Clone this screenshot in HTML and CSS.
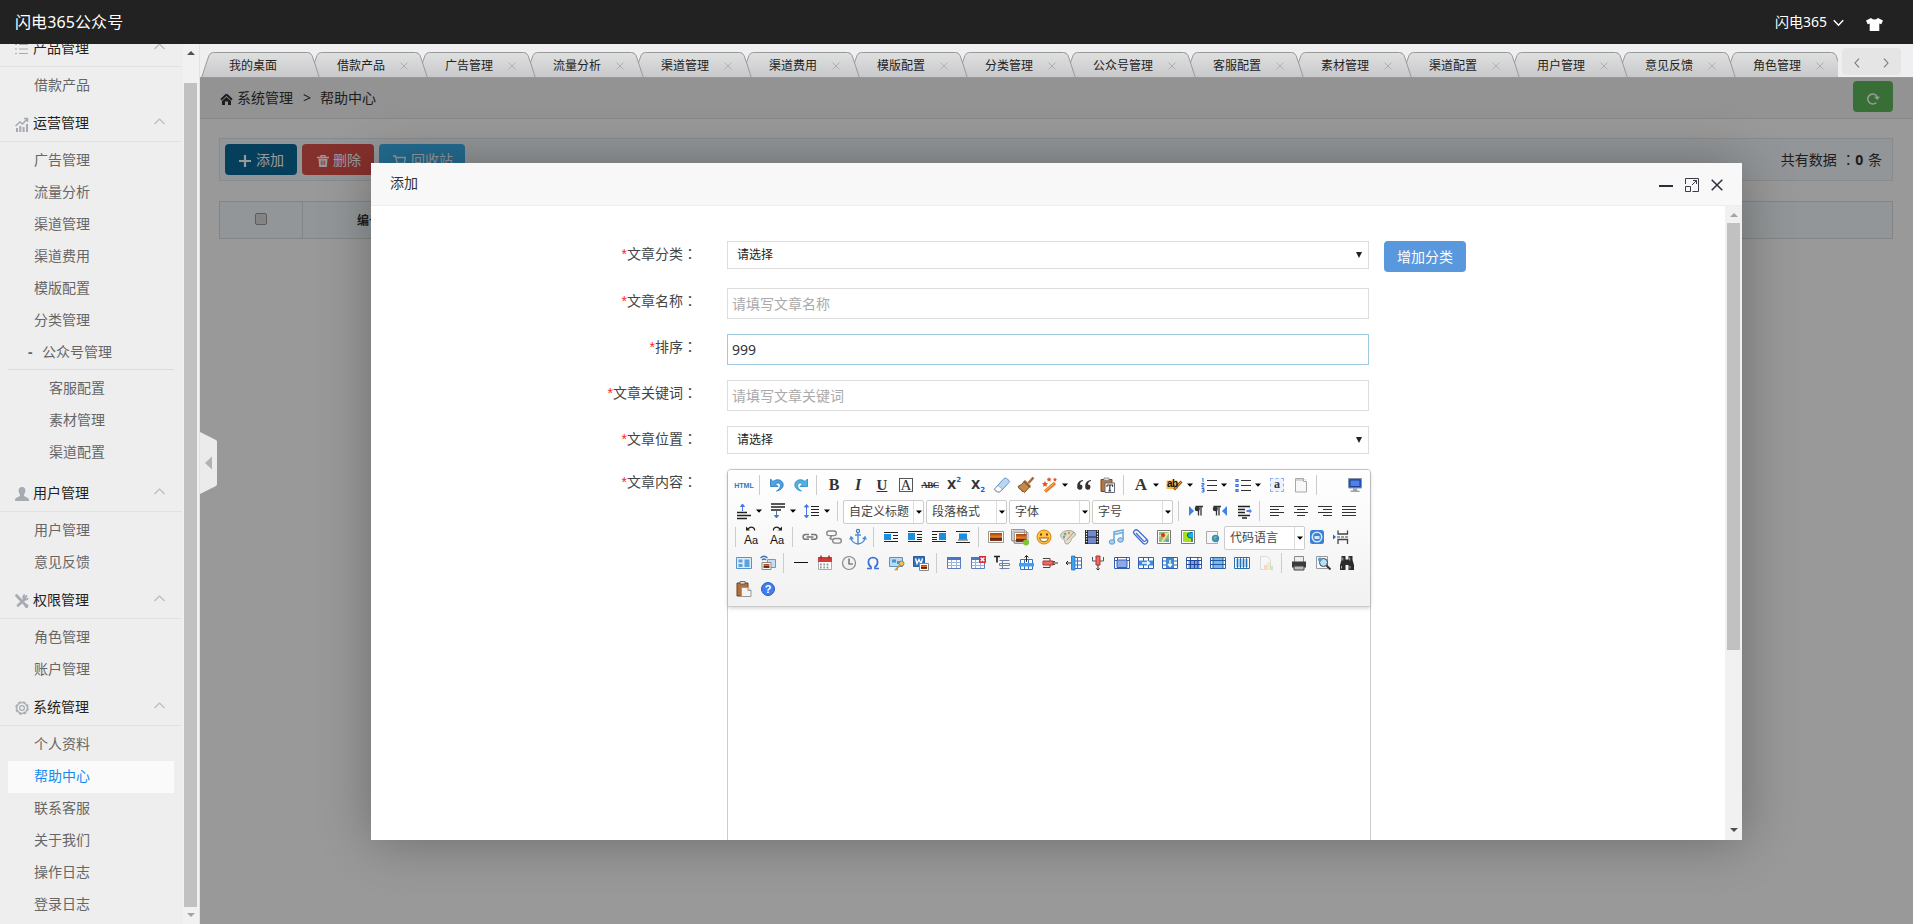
FILE: index.html
```html
<!DOCTYPE html>
<html lang="zh-CN">
<head>
<meta charset="utf-8">
<title>闪电365公众号</title>
<link rel="stylesheet" href="styles.css">
</head>
<body>
<svg class="defs" width="0" height="0">
  <defs>
    <linearGradient id="tabfill" x1="0" y1="0" x2="0" y2="1"><stop offset="0" stop-color="#dfe0e0"/><stop offset="1" stop-color="#c8c8ca"/></linearGradient>
    <linearGradient id="sunset" x1="0" y1="0" x2="0" y2="1"><stop offset="0" stop-color="#a83c10"/><stop offset=".55" stop-color="#f08a24"/><stop offset=".6" stop-color="#5a2410"/><stop offset="1" stop-color="#8a3a14"/></linearGradient>
    <symbol id="tab" viewBox="0 0 119 26"><path d="M.5 26L5.700 10 8 3.500Q9.200.5 12.500.5H106.500Q109.800.5 111 3.500L113.300 10 118.500 26" fill="url(#tabfill)" stroke="#999"/></symbol>
    <symbol id="tabwide" viewBox="0 0 131 26"><path d="M.5 26L5.700 10 8 3.500Q9.200.5 12.500.5H118.500Q121.800.5 123 3.500L125.300 10 130.500 26" fill="url(#tabfill)" stroke="#999"/></symbol>
    <symbol id="x" viewBox="0 0 8 8"><path d="M.5.5l7 7M7.500.5l-7 7" stroke="#a9b0b6" stroke-width="1" fill="none"/></symbol>
    <symbol id="up" viewBox="0 0 11 7"><path d="M.5 6l5-5 5 5" fill="none" stroke="#bbb" stroke-width="1.200"/></symbol>
    <symbol id="caret" viewBox="0 0 6 4"><path d="M0 .5h6L3 3.700z" fill="#000"/></symbol>
  </defs>
</svg>

<header class="top">
  <h1 class="brand">闪电365公众号</h1>
  <div class="user">闪电365
    <svg class="chev" width="11" height="8" viewBox="0 0 11 8"><path d="M.8 1.200l4.700 5 4.700-5" fill="none" stroke="#fff" stroke-width="1.500"/></svg>
    <svg width="17" height="13" viewBox="0 0 17 13"><path d="M5 0Q8.500 3 12 0L17 2.500 15.300 6.200 13.300 5.500V13H3.700V5.500L1.700 6.200 0 2.500z" fill="#fff"/></svg>
  </div>
</header>

<div class="main">
<aside class="side">
  <nav class="menu">
    <h2><svg class="mi" width="14" height="12" viewBox="0 0 14 12"><path d="M0 1.500h2M4 1.500h9M0 6h2M4 6h9M0 10.500h2M4 10.500h9" stroke="#a6abb3"/></svg>产品管理<svg class="up" width="11" height="7"><use href="#up"/></svg></h2>
    <ul><li>借款产品</li></ul>
    <h2><svg class="mi" width="14" height="15" viewBox="0 0 14 15"><path d="M1 11h2v4H1zM4.300 9h2v6h-2zM7.600 10h2v5h-2zM11 7h2v8h-2z" fill="#a6abb3"/><path d="M.5 9L5 5l2.500 2L12 2M9 1.500h3.500V5" fill="none" stroke="#a6abb3" stroke-width="1.500"/></svg>运营管理<svg class="up" width="11" height="7"><use href="#up"/></svg></h2>
    <ul><li>广告管理</li><li>流量分析</li><li>渠道管理</li><li>渠道费用</li><li>模版配置</li><li>分类管理</li>
      <li class="parent"><b>-</b>公众号管理</li>
      <li class="leaf first">客服配置</li><li class="leaf">素材管理</li><li class="leaf last">渠道配置</li></ul>
    <h2><svg class="mi" width="14" height="14" viewBox="0 0 14 14"><path d="M7 0C9.500 0 10.600 1.800 10.400 4 10.300 6 9.300 7 9 7.500 8.800 9 9.500 9.500 12 10.400 13.700 11 14 12 14 14H0C0 12 .3 11 2 10.400 4.500 9.500 5.200 9 5 7.500 4.700 7 3.700 6 3.600 4 3.400 1.800 4.500 0 7 0z" fill="#a6abb3"/></svg>用户管理<svg class="up" width="11" height="7"><use href="#up"/></svg></h2>
    <ul><li>用户管理</li><li>意见反馈</li></ul>
    <h2><svg class="mi" width="14" height="14" viewBox="0 0 14 14"><path d="M1.500 1.500l9.500 10M3 11.500L10 5" stroke="#a6abb3" stroke-width="2.600" stroke-linecap="round"/><path d="M12 1.500L9.500 4M13 4.200a2.500 2.500 0 1 1-3.200-3.400" fill="none" stroke="#a6abb3" stroke-width="1.800"/><circle cx="11.500" cy="12" r="2" fill="#a6abb3"/></svg>权限管理<svg class="up" width="11" height="7"><use href="#up"/></svg></h2>
    <ul><li>角色管理</li><li>账户管理</li></ul>
    <h2><svg class="mi" width="14" height="14" viewBox="0 0 14 14"><circle cx="7" cy="7" r="5.300" fill="none" stroke="#a6abb3" stroke-width="1.300"/><circle cx="7" cy="7" r="6.200" fill="none" stroke="#a6abb3" stroke-width="1.200" stroke-dasharray="3 1.870"/><circle cx="7" cy="7" r="2.400" fill="none" stroke="#a6abb3" stroke-width="1.200"/></svg>系统管理<svg class="up" width="11" height="7"><use href="#up"/></svg></h2>
    <ul><li>个人资料</li><li class="on">帮助中心</li><li>联系客服</li><li>关于我们</li><li>操作日志</li><li>登录日志</li></ul>
  </nav>
  <div class="sbar"><i class="tri dark"></i><i class="thumb"></i><i class="tri down"></i></div>
</aside>

<section class="work">
  <svg class="fold" width="17" height="62" viewBox="0 0 17 62"><path d="M0 0L16 8Q17 8.500 17 10V52Q17 53.500 16 54L0 62z" fill="#ebebeb"/><path d="M5 31L12 24.500v13z" fill="#b2b2b2"/></svg>
  <div class="tabs">
    <div class="strip">
      <div class="tab"><svg width="119" height="26"><use href="#tab"/></svg><span>我的桌面</span></div>
      <div class="tab"><svg width="119" height="26"><use href="#tab"/></svg><span>借款产品</span><svg class="x" width="8" height="8"><use href="#x"/></svg></div>
      <div class="tab"><svg width="119" height="26"><use href="#tab"/></svg><span>广告管理</span><svg class="x" width="8" height="8"><use href="#x"/></svg></div>
      <div class="tab"><svg width="119" height="26"><use href="#tab"/></svg><span>流量分析</span><svg class="x" width="8" height="8"><use href="#x"/></svg></div>
      <div class="tab"><svg width="119" height="26"><use href="#tab"/></svg><span>渠道管理</span><svg class="x" width="8" height="8"><use href="#x"/></svg></div>
      <div class="tab"><svg width="119" height="26"><use href="#tab"/></svg><span>渠道费用</span><svg class="x" width="8" height="8"><use href="#x"/></svg></div>
      <div class="tab"><svg width="119" height="26"><use href="#tab"/></svg><span>模版配置</span><svg class="x" width="8" height="8"><use href="#x"/></svg></div>
      <div class="tab"><svg width="119" height="26"><use href="#tab"/></svg><span>分类管理</span><svg class="x" width="8" height="8"><use href="#x"/></svg></div>
      <div class="tab wide"><svg width="131" height="26"><use href="#tabwide"/></svg><span>公众号管理</span><svg class="x" width="8" height="8"><use href="#x"/></svg></div>
      <div class="tab"><svg width="119" height="26"><use href="#tab"/></svg><span>客服配置</span><svg class="x" width="8" height="8"><use href="#x"/></svg></div>
      <div class="tab"><svg width="119" height="26"><use href="#tab"/></svg><span>素材管理</span><svg class="x" width="8" height="8"><use href="#x"/></svg></div>
      <div class="tab"><svg width="119" height="26"><use href="#tab"/></svg><span>渠道配置</span><svg class="x" width="8" height="8"><use href="#x"/></svg></div>
      <div class="tab"><svg width="119" height="26"><use href="#tab"/></svg><span>用户管理</span><svg class="x" width="8" height="8"><use href="#x"/></svg></div>
      <div class="tab"><svg width="119" height="26"><use href="#tab"/></svg><span>意见反馈</span><svg class="x" width="8" height="8"><use href="#x"/></svg></div>
      <div class="tab"><svg width="119" height="26"><use href="#tab"/></svg><span>角色管理</span><svg class="x" width="8" height="8"><use href="#x"/></svg></div>
    </div>
    <div class="pager">
      <svg width="6" height="10" viewBox="0 0 6 10"><path d="M5 .7L1 5l4 4.300" fill="none" stroke="#777" stroke-width="1.100"/></svg>
      <svg width="6" height="10" viewBox="0 0 6 10"><path d="M1 .7L5 5 1 9.300" fill="none" stroke="#777" stroke-width="1.100"/></svg>
    </div>
  </div>

  <div class="frame">
    <div class="crumb">
      <svg width="13" height="12" viewBox="0 0 13 12"><path d="M6.500 1.500L1 6.700M6.500 1.500L12 6.700" stroke="#333" stroke-width="2"/><path d="M6.500 4L11 8v4H8V8.500H5V12H2V8z" fill="#333"/></svg>
      <span>系统管理</span><i>&gt;</i><span>帮助中心</span>
      <span class="refresh"><svg width="14" height="13" viewBox="0 0 14 13"><path d="M10.300 10.500A5 5 0 1 1 11.300 5" fill="none" stroke="#fff" stroke-width="1.600"/><path d="M8 4.800h6L11.300 8z" fill="#fff"/></svg></span>
    </div>
    <div class="tools">
      <span class="btn add"><svg width="12" height="12" viewBox="0 0 12 12"><path d="M6 0v12M0 6h12" stroke="#fff" stroke-width="2.200"/></svg>添加</span>
      <span class="btn del"><svg width="12" height="12" viewBox="0 0 12 12"><path d="M0 2.500h12M4 2V.7h4V2" fill="none" stroke="#fff" stroke-width="1.300"/><path d="M1.500 3.800h9L9.800 12H2.200z" fill="#fff"/><path d="M4.300 5.500v4.500M6 5.500v4.500M7.700 5.500v4.500" stroke="#dd514c" stroke-width=".8"/></svg>删除</span>
      <span class="btn bin"><svg width="13" height="12" viewBox="0 0 13 12"><path d="M0 1h2.500l1.700 7.500h7L12.500 2.500H3" fill="none" stroke="#fff" stroke-width="1.300"/><circle cx="5" cy="11" r="1" fill="#fff"/><circle cx="10.500" cy="11" r="1" fill="#fff"/></svg>回收站</span>
      <span class="count">共有数据 <span class="colon" lang="zh-TW">：</span><b>0</b> 条</span>
    </div>
    <div class="thead"><div class="cb"><i></i></div><div class="no">编号</div></div>
    <div class="shade"></div>
  </div>
</section>
</div>

<div class="dialog">
  <div class="dhead"><span>添加</span>
    <svg width="14" height="14" viewBox="0 0 14 14"><path d="M0 8h14" stroke="#2e2d3c" stroke-width="2"/></svg>
    <svg width="14" height="14" viewBox="0 0 14 14"><path d="M.5 6V.5h13v13H7.500M.5 8.500h5v5h-5zM7 7l4.500-4.500M8 2.500h3.500V6" fill="none" stroke="#3c3b49"/></svg>
    <svg width="12" height="12" viewBox="0 0 12 12"><path d="M.7.700l10.600 10.600M11.300.7L.7 11.300" stroke="#2e2d3c" stroke-width="1.500"/></svg>
  </div>
  <div class="dbody">
    <form class="form">
      <div class="row r1"><label><em>*</em>文章分类<span class="colon" lang="zh-TW">：</span></label><div class="sel">请选择<i></i></div><span class="blue">增加分类</span></div>
      <div class="row"><label><em>*</em>文章名称<span class="colon" lang="zh-TW">：</span></label><div class="inp ph">请填写文章名称</div></div>
      <div class="row"><label><em>*</em>排序<span class="colon" lang="zh-TW">：</span></label><div class="inp focus">999</div></div>
      <div class="row"><label><em>*</em>文章关键词<span class="colon" lang="zh-TW">：</span></label><div class="inp ph">请填写文章关键词</div></div>
      <div class="row"><label><em>*</em>文章位置<span class="colon" lang="zh-TW">：</span></label><div class="sel">请选择<i></i></div></div>
      <div class="row"><label><em>*</em>文章内容<span class="colon" lang="zh-TW">：</span></label>
      <div class="editor">
       <div class="bar">
        <div class="line">
          <span class="ic html">HTML</span><s></s>
          <span class="ic"><svg viewBox="0 0 20 20"><path d="M3.500 4v7.500H11L8.500 9C10 7.500 12.500 7.500 13.200 9.500 14 12 12 14.500 9.500 16 14 15.500 17 12 16 8.500 15 4.500 9.500 3.500 6 6.500z" fill="#4ba3e6" stroke="#2a74b8" stroke-width=".8"/></svg></span>
          <span class="ic"><svg viewBox="0 0 20 20"><path d="M16.500 4v7.500H9L11.500 9C10 7.500 7.500 7.500 6.800 9.500 6 12 8 14.500 10.500 16 6 15.500 3 12 4 8.500 5 4.500 10.500 3.500 14 6.500z" fill="#4bb3e6" stroke="#2a84b8" stroke-width=".8"/></svg></span><s></s>
          <span class="ic ser b">B</span><span class="ic ser b it">I</span><span class="ic ser u">U</span><span class="ic ser bx"><i>A</i></span><span class="ic ser abc">ABC</span>
          <span class="ic xx">X<sup>2</sup></span><span class="ic xx">X<sub>2</sub></span>
          <span class="ic"><svg viewBox="0 0 20 20"><path d="M2.500 14L12 3.500Q13 2.500 14.500 3.500L17 5.500Q18 6.500 17 7.500L8 17H5.500L3 15.500Q2 14.800 2.500 14z" fill="#b9d6f3" stroke="#5f86bd" stroke-width=".9"/><path d="M2.500 14.200L6 10.500 10.200 14 8 16.700H5.500z" fill="#fff" stroke="#999" stroke-width=".7"/></svg></span>
          <span class="ic"><svg viewBox="0 0 20 20"><path d="M17.500 2.500L12.500 8" stroke="#ad6a2a" stroke-width="2.600"/><path d="M9 5.500L14.500 11 8.500 17.500 7 16 6 16.500 5 14.500 3.500 14 2 11.500Q6 10 9 5.500z" fill="#c38a45" stroke="#74461a" stroke-width=".9"/><path d="M8 6.500l6 6" stroke="#5c3512"/></svg></span>
          <span class="ic"><svg viewBox="0 0 20 20"><path d="M5 16.500L15 8" stroke="#e4731d" stroke-width="3.200"/><path d="M5 16L14 8.500" stroke="#f7c06a"/><g fill="#e8511c"><path d="M5 6l1 2 2 .3-1.500 1.400.4 2L5 10.800l-1.900.9.400-2L2 8.300 4 8zM9 2l.8 1.500 1.700.2-1.200 1.200.3 1.700L9 5.800l-1.500.8.300-1.700-1.200-1.200 1.700-.2zM15 2.500l.7 1.300 1.300.2-1 1 .3 1.500-1.300-.8-1.300.8.300-1.500-1-1 1.300-.2z"/></g></svg></span><span class="ar"><svg width="6" height="4"><use href="#caret"/></svg></span>
          <span class="ic"><svg viewBox="0 0 20 20"><path d="M9 6C6.500 6.500 6 8 6 9.500A2.600 2.600 0 1 1 3.300 11.500C3 8 5 5.500 9 5zM17 6C14.500 6.500 14 8 14 9.500A2.600 2.600 0 1 1 11.300 11.500C11 8 13 5.500 17 5z" fill="#333"/></svg></span>
          <span class="ic"><svg viewBox="0 0 20 20"><path d="M3 4.500h11v12H3z" fill="#b8763e" stroke="#7b4a20"/><path d="M6 3h5v2.500H6z" fill="#ddd" stroke="#777" stroke-width=".7"/><path d="M7 8h9.500v9.500H7z" fill="#fff" stroke="#667" /><path d="M9 10h5.600v1.800M9 10v1.800M11.800 10v6M10.500 15.800h2.600" fill="none" stroke="#334" stroke-width="1.200"/></svg></span><s></s>
          <span class="ic ser big">A</span><span class="ar"><svg width="6" height="4"><use href="#caret"/></svg></span>
          <span class="ic hl"><svg viewBox="0 0 20 20"><path d="M1.500 5.500h11v8.500h-11z" fill="#f5b94a"/><path d="M9 14.500L16.500 6.500" stroke="#8e4a16" stroke-width="2.600"/><path d="M9.500 14L16 7" stroke="#f3b05a"/></svg><i>ab</i></span><span class="ar"><svg width="6" height="4"><use href="#caret"/></svg></span>
          <span class="ic"><svg viewBox="0 0 20 20"><path d="M8 5.500h10M8 10.500h10M8 15.500h10" stroke="#333"/><path d="M3 4l1-.7v3.900M2.500 8.500H5V10H3v2h2.300M2.500 13.500H5v1.700H3.500H5V17H2.500" fill="none" stroke="#2d6be0"/></svg></span><span class="ar"><svg width="6" height="4"><use href="#caret"/></svg></span>
          <span class="ic"><svg viewBox="0 0 20 20"><path d="M8 5.500h10M8 10.500h10M8 15.500h10" stroke="#333"/><path d="M3 4.500h2v2H3zM3 9.500h2v2H3zM3 14.500h2v2H3z" fill="#fff" stroke="#2d6be0" stroke-width="1.200"/></svg></span><span class="ar"><svg width="6" height="4"><use href="#caret"/></svg></span>
          <span class="ic dash"><i>a</i></span>
          <span class="ic"><svg viewBox="0 0 20 20"><path d="M4.500 3.500h8l3 3v10.500h-11z" fill="#f8f8f8" stroke="#a8a8a8"/><path d="M5 4h10v2H5z" fill="#cfd4da"/><path d="M12.500 3.500v3h3" fill="#fff" stroke="#a8a8a8"/></svg></span><s></s>
          <span class="ic push"><svg viewBox="0 0 20 20"><path d="M3.500 3.500h13v9.500h-13z" fill="#2f5fc9" stroke="#8797ad"/><path d="M5 5h10v6.500H5z" fill="#4f82e6" stroke="#1d3f98"/><path d="M8 13.500h4v2H8zM5.500 15.500h9V17h-9z" fill="#98a2b3"/></svg></span>
        </div>
        <div class="line l2">
          <span class="ic"><svg viewBox="0 0 20 20"><path d="M3 11.500h10M3 14.500h14M3 17.500h10" stroke="#222" stroke-width="1.400"/><path d="M8.500 10V4M6.500 5.500l2-2.500 2 2.500z" fill="#4876e0" stroke="#4876e0"/></svg></span><span class="ar"><svg width="6" height="4"><use href="#caret"/></svg></span>
          <span class="ic"><svg viewBox="0 0 20 20"><path d="M3 3h14M3 6h14M3 9h10" stroke="#222" stroke-width="1.400"/><path d="M8.500 10v6M6.500 14.500l2 2.500 2-2.500z" fill="#7c9be0" stroke="#4876b0"/></svg></span><span class="ar"><svg width="6" height="4"><use href="#caret"/></svg></span>
          <span class="ic"><svg viewBox="0 0 20 20"><path d="M9 5.500h8M9 8.500h8M9 11.500h8M9 14.500h8" stroke="#222" stroke-width="1.200"/><path d="M4.500 5v10M2.500 6l2-2.500 2 2.500zM2.500 14.500l2 2.500 2-2.500z" fill="#4876e0" stroke="#4876e0"/></svg></span><span class="ar"><svg width="6" height="4"><use href="#caret"/></svg></span><s></s>
          <span class="combo">自定义标题<i><svg width="6" height="4"><use href="#caret"/></svg></i></span><span class="combo">段落格式<i><svg width="6" height="4"><use href="#caret"/></svg></i></span><span class="combo">字体<i><svg width="6" height="4"><use href="#caret"/></svg></i></span><span class="combo">字号<i><svg width="6" height="4"><use href="#caret"/></svg></i></span><s></s>
          <span class="ic"><svg viewBox="0 0 20 20"><path d="M3 5l5 5-5 5z" fill="#3f82ec"/><path d="M12.500 5.500v9M15 5.500v9M9.500 5.500H17" stroke="#333" fill="none" stroke-width="1.300"/><circle cx="11.300" cy="7.800" r="2.500" fill="#333"/></svg></span>
          <span class="ic"><svg viewBox="0 0 20 20"><path d="M17 5l-5 5 5 5z" fill="#3f82ec"/><path d="M6.500 5.500v9M9 5.500v9M3.500 5.500H11" stroke="#333" fill="none" stroke-width="1.300"/><circle cx="5.300" cy="7.800" r="2.500" fill="#333"/></svg></span>
          <span class="ic"><svg viewBox="0 0 20 20"><path d="M4 5.500h12M4 8.500h7M4 11.500h7M4 14.500h12M8 17h5" stroke="#222" stroke-width="1.500"/><path d="M12.500 9h3V7.500l2.500 2.500-2.500 2.500V11h-3z" fill="#4a86e8"/></svg></span><s></s>
          <span class="ic"><svg viewBox="0 0 20 20"><path d="M3 5.500h14M3 8.500h9M3 11.500h14M3 14.500h9" stroke="#333"/></svg></span>
          <span class="ic"><svg viewBox="0 0 20 20"><path d="M3 5.500h14M6 8.500h8M3 11.500h14M6 14.500h8" stroke="#333"/></svg></span>
          <span class="ic"><svg viewBox="0 0 20 20"><path d="M3 5.500h14M8 8.500h9M3 11.500h14M8 14.500h9" stroke="#333"/></svg></span>
          <span class="ic"><svg viewBox="0 0 20 20"><path d="M3 5.500h14M3 8.500h14M3 11.500h14M3 14.500h14" stroke="#333"/></svg></span>
        </div>
        <div class="line l3"><s></s>
          <span class="ic case wide"><svg viewBox="0 0 20 20"><path d="M7 5C9 2.500 12 2.500 13.500 5V6.500" fill="none" stroke="#222" stroke-width="1.300"/><path d="M5 2.500v4h4z" fill="#222"/></svg><i>A<small>a</small></i></span>
          <span class="ic case"><svg viewBox="0 0 20 20"><path d="M13 5C11 2.500 8 2.500 6.500 5V6.500" fill="none" stroke="#222" stroke-width="1.300"/><path d="M15 2.500v4h-4z" fill="#222"/></svg><i>A<small>a</small></i></span><s></s>
          <span class="ic"><svg viewBox="0 0 20 20"><path d="M9 7.500H5.500a2.400 2.400 0 0 0 0 4.800H9M11 7.500h3.500a2.400 2.400 0 0 1 0 4.800H11M6.500 10h7" fill="none" stroke="#777" stroke-width="1.500"/></svg></span>
          <span class="ic"><svg viewBox="0 0 20 20"><path d="M5 4h5a2.300 2.300 0 0 1 0 4.600H5A2.300 2.300 0 0 1 5 4zM11 11.500h4a2.300 2.300 0 0 1 0 4.600h-4a2.300 2.300 0 0 1 0-4.600zM8 8.500l-2 3 3 1.500" fill="none" stroke="#888" stroke-width="1.400"/></svg></span>
          <span class="ic"><svg viewBox="0 0 20 20"><circle cx="10" cy="4" r="1.600" fill="none" stroke="#3c7cb8" stroke-width="1.200"/><path d="M10 5.500V17M7 8h6M3 10.500Q3.500 16 10 17 16.500 16 17 10.500M1.800 12.500L3 10l2.300 2M18.200 12.500L17 10l-2.300 2" fill="none" stroke="#4e90cf" stroke-width="1.400"/></svg></span><s></s>
          <span class="ic"><svg viewBox="0 0 20 20"><path d="M3 5.500h14M12 8.500h5M12 11.500h5M3 14.500h14" stroke="#222"/><path d="M3 7h7v6H3z" fill="#1a8fe0"/></svg></span>
          <span class="ic"><svg viewBox="0 0 20 20"><path d="M3 4.500h14M12 7.500h5M12 10.500h5M12 12.500h5M3 14.500h14" stroke="#222"/><path d="M3 6h7v7H3z" fill="#1a8fe0"/></svg></span>
          <span class="ic"><svg viewBox="0 0 20 20"><path d="M3 4.500h14M3 7.500h5M3 10.500h5M3 12.500h5M3 14.500h14" stroke="#222"/><path d="M10 6h7v7h-7z" fill="#1a8fe0"/></svg></span>
          <span class="ic"><svg viewBox="0 0 20 20"><path d="M3 4.500h14M3 15.500h14" stroke="#222"/><path d="M6 6.500h8v6H6z" fill="#1a8fe0"/><path d="M5 13h10" stroke="#555"/></svg></span><s></s>
          <span class="ic"><svg viewBox="0 0 20 20"><path d="M2.500 4.500h15v11h-15z" fill="#fff" stroke="#999"/><path d="M4 6h12v8H4z" fill="url(#sunset)"/></svg></span>
          <span class="ic"><svg viewBox="0 0 20 20"><path d="M1.500 2.500h13v11h-13zM3 4h13.500v11H3zM4.500 5.500H18v11H4.500z" fill="#fff" stroke="#999"/><path d="M6 7h10.500v8H6z" fill="url(#sunset)"/><circle cx="16" cy="15.500" r="3" fill="#7cc730"/></svg></span>
          <span class="ic"><svg viewBox="0 0 20 20"><circle cx="10" cy="10" r="7" fill="#ffc440" stroke="#d98015"/><path d="M7 6.500v2M13 6.500v2" stroke="#7a3c05" stroke-width="2"/><path d="M5.500 11h9Q14 14.800 10 14.800T5.500 11z" fill="#fff" stroke="#9a4d0a" stroke-width=".9"/></svg></span>
          <span class="ic"><svg viewBox="0 0 20 20"><path d="M3 7C5 3 14 2 17 6c1.500 3-2 4-3 5-1 2-2 6-5 6-4-.500-1-4-3-4.500C4 12 2 10 3 7z" fill="#e2ddd3" stroke="#aaa497"/><circle cx="7" cy="7" r="1.500" fill="#7db15c"/><circle cx="11" cy="6" r="1.400" fill="#e59b4d"/><circle cx="6" cy="10" r="1.200" fill="#6e97cd"/><path d="M9 13l7-8" stroke="#b58d58"/></svg></span>
          <span class="ic"><svg viewBox="0 0 20 20"><path d="M3 3h14v14H3z" fill="#222"/><path d="M6 3.500h8v6H6zM6 10.500h8v6H6z" fill="#7289cf"/><path d="M4.500 3.500v13M15.500 3.500v13" stroke="#fff" stroke-width="1.300" stroke-dasharray="1.300 1.300"/></svg></span>
          <span class="ic"><svg viewBox="0 0 20 20"><path d="M8 14.500V5L17 3v9.500M8 7.500l9-2" fill="none" stroke="#6dade0" stroke-width="1.600"/><ellipse cx="6" cy="15" rx="2.800" ry="2.200" fill="#a7d0f0" stroke="#5b9bd0"/><ellipse cx="14.500" cy="13" rx="2.800" ry="2.200" fill="#a7d0f0" stroke="#5b9bd0"/></svg></span>
          <span class="ic"><svg viewBox="0 0 20 20"><path d="M6 6l7.500 8a1.800 1.800 0 0 0 2.600-2.400L8 3.500C5.500 1.500 2 4.500 4.500 7.300l8.500 9C16 18.500 19 15 17 12.500L10.500 6" fill="none" stroke="#4271d6" stroke-width="1.300"/></svg></span>
          <span class="ic"><svg viewBox="0 0 20 20"><path d="M3.500 3.500h13v13h-13z" fill="#fff" stroke="#777"/><path d="M5 5h10v10H5z" fill="#94bf7c"/><path d="M5 9l10-3M8 15l6-9" stroke="#f5e58a" stroke-width="1.500"/><circle cx="9" cy="8" r="2" fill="#d8332c"/><path d="M12 12h3v3h-3z" fill="#52a6dd"/></svg></span>
          <span class="ic"><svg viewBox="0 0 20 20"><path d="M3.500 3.500h13v13h-13z" fill="#fff" stroke="#777"/><path d="M5 5h10v10H5z" fill="#10b5e8"/><path d="M5 5h8L9 8l2 3 4 0v4H5z" fill="#a6e21c"/><path d="M14 5.500Q9 6 9.500 8.500T14 11v4" fill="none" stroke="#1559a8" stroke-width="1.200"/></svg></span>
          <span class="ic"><svg viewBox="0 0 20 20"><path d="M4.500 4.500h11v12h-11z" fill="#f7f7f7" stroke="#aaa"/><circle cx="13.500" cy="11.500" r="3.700" fill="#3d8ccc"/><path d="M11.500 11q2-3 3.500-1.500L13 12l1.500 2z" fill="#7dc45a"/></svg></span>
          <span class="combo">代码语言<i><svg width="6" height="4"><use href="#caret"/></svg></i></span>
          <span class="ic"><svg viewBox="0 0 20 20"><rect x="3" y="3" width="14" height="14" rx="2.500" fill="#3c80d6"/><circle cx="10" cy="10" r="4.700" fill="none" stroke="#cfe7ff" stroke-width="1.600"/><path d="M7.500 9h5v3h-5z" fill="#cfe7ff"/></svg></span>
          <span class="ic"><svg viewBox="0 0 20 20"><path d="M7 3.500V7h9.500V3.500M7 17v-4.500h9.500V17" fill="none" stroke="#444" stroke-width="1.300"/><path d="M6 10h12" stroke="#444" stroke-width="1.200" stroke-dasharray="3 1"/><path d="M2 7.500L5 10l-3 2.500z" fill="#2d5fd0"/></svg></span>
        </div>
        <div class="line l4">
          <span class="ic"><svg viewBox="0 0 20 20"><path d="M2.500 4.500h15v11h-15z" fill="#dceefa" stroke="#5a93c4"/><path d="M4.500 6.500h4v3h-4zM4.500 11h4v3h-4zM10.500 6.500h5v7.500h-5z" fill="#5ea2dc"/></svg></span>
          <span class="ic"><svg viewBox="0 0 20 20"><path d="M9.500 6.500h8v8h-8z" fill="#c8dcf5" stroke="#7894bc"/><path d="M2.500 5Q6 1.500 9.500 5M4 7q2-2 4 0" fill="none" stroke="#3377b8" stroke-width="1.200"/><path d="M4 9.500h9v7H4z" fill="#fff" stroke="#888"/><path d="M5.500 11h6v4h-6z" fill="url(#sunset)"/></svg></span><s></s>
          <span class="ic"><svg viewBox="0 0 20 20"><path d="M3 9.500h14" stroke="#111"/></svg></span>
          <span class="ic"><svg viewBox="0 0 20 20"><path d="M3.500 4.500h13v12h-13z" fill="#fff" stroke="#aaa"/><path d="M3 4h14v5H3z" fill="#d33a34"/><path d="M6 2.500v3M14 2.500v3" stroke="#8b2020" stroke-width="1.300"/><path d="M5 11.500h10M5 14.500h10" stroke="#999" stroke-width="1.800" stroke-dasharray="1.800 1.500"/></svg></span>
          <span class="ic"><svg viewBox="0 0 20 20"><circle cx="10" cy="10" r="6.500" fill="#f1f1f1" stroke="#888" stroke-width="1.200"/><path d="M10 5.500V11h4" fill="none" stroke="#555" stroke-width="1.200"/></svg></span>
          <span class="ic"><svg viewBox="0 0 20 20"><path d="M4 15.500h4V14C4.500 11.500 4 5 10 4.500 16 5 15.500 11.500 12 14v1.500h4" fill="none" stroke="#3d6fd8" stroke-width="1.700"/></svg></span>
          <span class="ic"><svg viewBox="0 0 20 20"><path d="M2.500 4.500h13v9h-13z" fill="#b9dcf4" stroke="#5594c4"/><path d="M5 6.500h4v3H5zM10 8h3v3h-3z" fill="#4b93ce"/><circle cx="14.500" cy="10.500" r="2.500" fill="#f0bf58" stroke="#b17c25"/><path d="M12.500 12.500L9 16.500h2" fill="none" stroke="#cf9430" stroke-width="1.700"/></svg></span>
          <span class="ic"><svg viewBox="0 0 20 20"><path d="M2.500 3.500h11v10h-11z" fill="#3170bd" stroke="#2a5b9c"/><path d="M4.500 5.500l1.500 5 2-4 2 4 1.500-5" fill="none" stroke="#fff" stroke-width="1.400"/><path d="M8.500 10.500h9v7h-9z" fill="#fff" stroke="#888"/><path d="M10 12h6v4h-6z" fill="url(#sunset)"/></svg></span><s></s>
          <span class="ic"><svg viewBox="0 0 20 20"><path d="M3.500 4.500h13v11h-13z" fill="#fff" stroke="#5b7dbb"/><path d="M3 4h14v3H3z" fill="#4b76c8"/><path d="M7.500 7v8M12.500 7v8M4 9.500h12M4 12.500h12" stroke="#9ab4e0"/></svg></span>
          <span class="ic"><svg viewBox="0 0 20 20"><path d="M3.500 4.500h13v11h-13z" fill="#fff" stroke="#5b7dbb"/><path d="M3 4h10v3H3z" fill="#4b76c8"/><path d="M7.500 7v8M12.500 7v8M4 9.500h12M4 12.500h12" stroke="#9ab4e0"/><path d="M11 3h7v7h-7z" fill="#d92f3a"/><path d="M12.700 4.700l3.600 3.600M16.300 4.700l-3.600 3.600" stroke="#fff" stroke-width="1.400"/></svg></span>
          <span class="ic"><svg viewBox="0 0 20 20"><path d="M2 3.500h6M5 3.500v6" stroke="#222" stroke-width="1.700"/><path d="M7.500 7.500h10M7.500 10.500h10v2h-10zM7.500 15.500h10M10.500 7.500v9" fill="none" stroke="#6f83ab"/></svg></span>
          <span class="ic"><svg viewBox="0 0 20 20"><path d="M4.500 6.500h12v10h-12zM8.500 6v11M12.500 6v11" fill="#fff" stroke="#3c6ec8"/><path d="M3 10h15v3.500H3z" fill="#3fa1ee"/><path d="M10.500 9V2.500M8.500 4.500l2-2 2 2" fill="none" stroke="#222"/></svg></span>
          <span class="ic"><svg viewBox="0 0 20 20"><path d="M3 5.500h7v3h5M3 14.500h7v-3h5" fill="none" stroke="#444"/><path d="M3 8h10v4H3z" fill="#ee6a66" stroke="#a33"/><path d="M13 10h5" stroke="#333"/></svg></span>
          <span class="ic"><svg viewBox="0 0 20 20"><path d="M8 4.500h9.500v11H8zM8 8h9M8 12h9M13.500 4v11" fill="#fff" stroke="#3c6ec8"/><path d="M7.500 3H11v14H7.500z" fill="#3fa1ee" stroke="#2867b8" stroke-width=".7"/><path d="M7 10H2M4 8l-2 2 2 2" fill="none" stroke="#222"/></svg></span>
          <span class="ic"><svg viewBox="0 0 20 20"><path d="M4.500 4v4h4v4M15.500 4v4h-4v4" fill="none" stroke="#555"/><path d="M8 3h4v9H8z" fill="#ee6a66" stroke="#a33"/><path d="M10 12v5M8.300 15.500L10 17l1.700-1.500" fill="none" stroke="#333"/></svg></span>
          <span class="ic"><svg viewBox="0 0 20 20"><path d="M2.500 4.500h15v11h-15z" fill="#fff" stroke="#2f5fae"/><path d="M2.500 7.500h15M5.500 4.500v11M14.500 4.500v11" stroke="#2f5fae"/><path d="M5 7h10v7.500H5z" fill="#8fa8ec" stroke="#3c5fae"/></svg></span>
          <span class="ic"><svg viewBox="0 0 20 20"><path d="M2.500 4.500h15v11h-15zM7.500 4v12M12.500 4v12" fill="#fff" stroke="#2f5fae"/><path d="M3 7.500h14v5H3z" fill="#3e8bd8"/><path d="M6 10h7M11 8l2.500 2-2.500 2" fill="none" stroke="#fff" stroke-width="1.300"/></svg></span>
          <span class="ic"><svg viewBox="0 0 20 20"><path d="M2.500 4.500h15v11h-15zM3 8h14M3 12h14" fill="#fff" stroke="#2f5fae"/><path d="M6 5h8v10H6z" fill="#3e8bd8"/><path d="M10 7v6M8 11l2 2.500 2-2.500" fill="none" stroke="#fff" stroke-width="1.300"/></svg></span>
          <span class="ic"><svg viewBox="0 0 20 20"><path d="M2.500 4.500h15v11h-15z" fill="#fff" stroke="#2f5fae"/><path d="M4.500 7h11v8h-11z" fill="#7d9fe8"/><path d="M2.500 7.500h15M2.500 11.500h15M6.500 4.500v11M10.500 7v8M13.800 4.500v11" stroke="#23499a"/></svg></span>
          <span class="ic"><svg viewBox="0 0 20 20"><path d="M2.500 4.500h15v11h-15z" fill="#fff" stroke="#2f5fae"/><path d="M5 5h10v10H5z" fill="#7db4ea"/><path d="M2.500 7.500h15M2.500 11.500h15M5 4.500v11M15 4.500v11" stroke="#235a9e"/></svg></span>
          <span class="ic"><svg viewBox="0 0 20 20"><path d="M2.500 4.500h15v11h-15z" fill="#fff" stroke="#2f6fae"/><path d="M4 6h12v8H4z" fill="#a5cdf0"/><path d="M5.500 4.500v11M8.500 4.500v11M11.500 4.500v11M14.500 4.500v11" stroke="#2f6fae"/></svg></span>
          <span class="ic faint"><svg viewBox="0 0 20 20"><path d="M4.500 3.500h7l3 3v10h-10z" fill="#fafafa" stroke="#aaa"/><path d="M8 12h3v5H8z" fill="#f5a06a"/><path d="M11 9h3v8h-3z" fill="#f5d86a"/><path d="M14 13h3v4h-3z" fill="#8cc96a"/></svg></span><s></s>
          <span class="ic"><svg viewBox="0 0 20 20"><path d="M5.500 3.500h9v6h-9z" fill="#eee" stroke="#888"/><path d="M3 8.500h14v6H3z" fill="#3b3b3b"/><path d="M5 13h10v4H5z" fill="#bbb" stroke="#444"/></svg></span>
          <span class="ic"><svg viewBox="0 0 20 20"><path d="M3.500 3.500h11v12h-11z" fill="#f6f9fc" stroke="#999"/><circle cx="10.500" cy="9.500" r="4" fill="#bcdff5" stroke="#345"/><path d="M13.500 12.500l4 4" stroke="#333" stroke-width="2"/><circle cx="7" cy="6.500" r="2" fill="#4a9bd8"/></svg></span>
          <span class="ic"><svg viewBox="0 0 20 20"><path d="M4.500 3h4v3.500h3V3h4v4L17 12v5h-5.500v-5h-3v5H3v-5l1.500-5z" fill="#2b2b2b"/><path d="M4.500 13v2.500M13 13v2.500M5.800 4.500v3M12.700 4.500v3" stroke="#aaa"/></svg></span>
        </div>
        <div class="line l5">
          <span class="ic"><svg viewBox="0 0 20 20"><path d="M3 4h11v13H3z" fill="#b0713d" stroke="#6f421c"/><path d="M6 2.500h5V5H6z" fill="#ddd" stroke="#555" stroke-width=".8"/><path d="M7.500 8.500H14l3 3v6H7.500z" fill="#f4f4f4" stroke="#999"/><path d="M14 8.500v3h3" fill="#ddd" stroke="#999"/></svg></span>
          <span class="ic help"><i>?</i></span>
        </div>
       </div>
      </div></div>
    </form>
    <div class="sbar dsb"><i class="tri"></i><i class="thumb"></i><i class="tri down dark"></i></div>
  </div>
</div>
</body>
</html>
```
FILE: styles.css
```css
* { box-sizing: border-box; }
html { height: 924px; overflow: hidden; }
body { margin: 0; height: 924px; overflow: hidden; position: relative; background: #fff; color: #333; font: 14px/20px "Noto Sans", "Noto Sans CJK SC", sans-serif; display: flex; flex-direction: column; }
svg { flex: none; display: block; }
i, em { font-style: normal; }
.defs { position: absolute; }
.colon { font-family: "Noto Sans CJK TC", sans-serif; line-height: 1; }

.top { flex: none; height: 44px; background: #222; color: #fff; display: flex; align-items: center; justify-content: space-between; padding: 0 30px 0 15px; }
.brand { margin: 0; font-size: 16px; font-weight: 400; line-height: 44px; letter-spacing: .1px; }
.user { display: flex; align-items: center; height: 44px; line-height: 42px; }
.user .chev { margin: 2px 22px 0 6px; }
.user svg:last-child { margin-top: 4px; }

.main { flex: 1; display: flex; min-height: 0; }
.side { width: 200px; flex: none; background: #eee; border-right: 1px solid #e2e2e2; display: flex; overflow: hidden; }
.menu { width: 182px; margin-top: -14px; }
.menu h2 { margin: 0; height: 37px; border-bottom: 1px solid #e2e2e2; display: flex; align-items: center; font-size: 14px; font-weight: 400; color: #222; padding: 0 17px 1px 15px; }
.mi { width: 14px; margin: 3px 4px 0 0; }
.up { margin: -2px 0 0 auto; }
.menu ul { list-style: none; margin: 0; padding: 3px 8px; }
.menu li { height: 32px; line-height: 30px; padding-left: 26px; color: #666; }
.menu li.parent { padding-left: 20px; height: 33px; border-bottom: 1px solid #dcdcdc; margin-bottom: 3px; }
.menu li.parent b { display: inline-block; width: 14px; }
.menu li.leaf { padding-left: 41px; }
.menu li.last { margin-bottom: 3px; }
.menu li.on { background: #fafafa; color: #148cf1; }

.sbar { width: 15px; margin-left: 1px; background: #f1f1f1; display: flex; flex-direction: column; align-items: center; }
.side .sbar { padding: 7px 0 6px; width: 16px; }
.sbar .thumb { width: 13px; background: #c1c1c1; }
.side .thumb { height: 824px; margin: 28px 1px 6px 0; }
.tri { width: 0; height: 0; border: 4px solid transparent; border-top: 0; border-bottom: 4px solid #a3a3a3; }
.tri.dark { border-bottom-color: #505050; }
.tri.down { border-bottom: 0; border-top: 4px solid #a3a3a3; }
.tri.down.dark { border-top-color: #505050; }

.work { flex: 1; min-width: 0; position: relative; display: flex; flex-direction: column; }
.fold { position: absolute; left: 0; top: 388px; z-index: 5; }
.tabs { height: 34px; flex: none; background: #efeff1; border-bottom: 1px solid #999; display: flex; }
.strip { width: 1638px; overflow: hidden; padding: 8px 0 0 1px; display: flex; font-size: 12px; color: #222; }
.tab { position: relative; flex: none; width: 119px; height: 26px; margin-right: -11px; display: flex; align-items: center; padding-left: 28px; }
.tab.wide { width: 131px; }
.tab > svg:first-child { position: absolute; left: 0; top: 0; }
.tab > span, .tab .x { position: relative; z-index: 40; }
.tab > span { margin-top: 1px; }
.tab .x { margin: 1px 0 0 15px; }
.tab:nth-child(1) > svg:first-child { z-index: 20; }
.tab:nth-child(2) > svg:first-child { z-index: 19; }
.tab:nth-child(3) > svg:first-child { z-index: 18; }
.tab:nth-child(4) > svg:first-child { z-index: 17; }
.tab:nth-child(5) > svg:first-child { z-index: 16; }
.tab:nth-child(6) > svg:first-child { z-index: 15; }
.tab:nth-child(7) > svg:first-child { z-index: 14; }
.tab:nth-child(8) > svg:first-child { z-index: 13; }
.tab:nth-child(9) > svg:first-child { z-index: 12; }
.tab:nth-child(10) > svg:first-child { z-index: 11; }
.tab:nth-child(11) > svg:first-child { z-index: 10; }
.tab:nth-child(12) > svg:first-child { z-index: 9; }
.tab:nth-child(13) > svg:first-child { z-index: 8; }
.tab:nth-child(14) > svg:first-child { z-index: 7; }
.tab:nth-child(15) > svg:first-child { z-index: 6; }
.pager { margin: 4px 0 0 4px; width: 59px; height: 27px; border-radius: 4px; background: #e5e5e5; display: flex; align-items: center; justify-content: space-between; padding: 2px 12px 0; }

.frame { flex: 1; position: relative; background: #fff; }
.shade { position: absolute; inset: 0; background: rgba(0,0,0,.4); }
.crumb { height: 41px; background: #f5f5f5; border-bottom: 1px solid #e5e5e5; display: flex; align-items: center; padding: 0 20px; }
.crumb > svg { margin: 2px 4px 0 0; }
.crumb i { margin: 0 9px 0 10px; }
.refresh { margin: -3px 0 0 auto; width: 40px; height: 31px; border-radius: 4px; background: #5eb95c; display: flex; align-items: center; justify-content: center; padding-top: 3px; }
.tools { margin: 19px 20px 0 19px; height: 43px; border: 1px solid #e5e5e5; background: #f5fafe; display: flex; align-items: center; padding-left: 5px; gap: 5px; }
.btn { height: 31px; border-radius: 4px; color: #fff; display: flex; align-items: center; padding: 0 13px 0 14px; }
.btn svg { margin: 2px 5px 0 0; }
.add { background: #0a6999; }
.del { background: #dd514c; padding: 0 13px 0 15px; }
.del svg { margin-right: 4px; }
.bin { background: #3bb4f2; padding-right: 12px; width: 86px; }
.count { margin-left: auto; padding-right: 10px; word-spacing: 1px; }
.thead { margin: 20px 20px 0 19px; height: 38px; border: 1px solid #ddd; background: #f5fafe; display: flex; font-size: 12px; font-weight: 700; }
.cb { width: 83px; border-right: 1px solid #ddd; display: flex; align-items: center; justify-content: center; }
.cb i { width: 12px; height: 12px; border: 1px solid #999; border-radius: 2px; margin-top: -2px; background: #ddd; }
.no { padding-left: 54px; line-height: 37px; }

.dialog { position: absolute; left: 371px; top: 163px; width: 1371px; height: 677px; background: #fff; box-shadow: 1px 1px 50px rgba(0,0,0,.3); z-index: 50; display: flex; flex-direction: column; overflow: hidden; }
.dhead { flex: none; height: 43px; background: #f8f8f8; border-bottom: 1px solid #eee; padding: 0 19px; display: flex; align-items: center; gap: 12px; }
.dhead span { margin: -2px auto 0 0; }
.dhead svg { margin-top: 2px; }
.dbody { flex: 1; display: flex; min-height: 0; }
.form { flex: 1; padding-top: 35px; color: #444; overflow: hidden; }
.row { display: flex; align-items: flex-start; margin-bottom: 15px; }
.row.r1 { margin-bottom: 16px; }
.row label { width: 326px; height: 28px; margin-right: 30px; line-height: 26px; text-align: right; flex: none; }
.row em { color: #f22; font-family: "Liberation Sans", sans-serif; line-height: 1; }
.inp, .sel { width: 642px; border: 1px solid #ddd; background: #fff; }
.inp { height: 31px; line-height: 30px; padding-left: 4px; color: #333; }
.ph { color: #aaa; }
.focus { border-color: #9fcbe2; }
.sel { height: 28px; line-height: 26px; font-size: 12px; padding: 0 6px 0 9px; color: #222; display: flex; justify-content: space-between; align-items: center; }
.sel i { width: 0; height: 0; border: 3px solid transparent; border-top: 6px solid #222; border-bottom: 0; }
.blue { margin-left: 15px; width: 82px; height: 31px; border-radius: 4px; background: #5a98de; color: #fff; text-align: center; line-height: 31px; }
.dsb { width: 17px; margin: 0; padding-top: 7px; }
.dsb .thumb { height: 427px; margin: 6px 0 178px; }

.editor { width: 644px; height: 500px; border: 1px solid #ccc; border-radius: 4px 4px 0 0; }
.bar { height: 137px; border-bottom: 1px solid #ccc; border-radius: 3px 3px 0 0; background: linear-gradient(#fff, #f1f1f1); box-shadow: 0 1px 4px rgba(0,0,0,.2); padding: 2px 2px 0 4px; }
.line { height: 26px; display: flex; align-items: center; }
.line s { flex: none; width: 9px; height: 20px; border-left: 1px solid #ccc; transform: translateX(3px); }
.ic { flex: none; width: 24px; height: 20px; display: flex; align-items: center; justify-content: center; color: #333; }
.ic > svg { width: 20px; height: 20px; }
.ar { width: 10px; display: flex; flex: none; }
.push { margin-left: auto; margin-right: 1px; }
.html { font: 700 7px "Liberation Sans", sans-serif; color: #3177b5; }
.ser { font: 400 17px/20px "Liberation Serif", serif; }
.ser.b { font-weight: 700; font-size: 16px; }
.it { font-style: italic; }
.u { text-decoration: underline; font-size: 15px; font-weight: 700; }
.bx i { border: 1px solid #555; width: 14px; height: 14px; line-height: 13px; text-align: center; font-size: 15px; }
.abc { font-size: 9px; font-weight: 700; text-decoration: line-through; letter-spacing: -.5px; }
.xx { font: 700 12px/20px "DejaVu Sans", sans-serif; }
.xx sup, .xx sub { font-size: 7px; color: #2457d6; line-height: 8px; }
.xx sup { align-self: flex-start; margin-top: 1px; }
.xx sub { align-self: flex-end; margin-bottom: 1px; }
.big { font-size: 17px; font-weight: 700; }
.hl { position: relative; }
.hl i { position: absolute; left: 4px; top: 0; font: 700 10px/18px "Liberation Sans", sans-serif; color: #111; letter-spacing: -.5px; }
.dash i { width: 14px; height: 14px; border: 1px dashed #8fb2ee; background: #eef4ff; font: 700 12px/10px "Liberation Serif", serif; text-align: center; }
.combo { flex: none; width: 81px; height: 24px; margin: 2px 2px 0 0; border: 1px solid #ccc; border-radius: 2px; background: #fff; font-size: 12px; line-height: 22px; padding-left: 5px; display: flex; justify-content: space-between; white-space: nowrap; }
.combo i { width: 10px; border-left: 1px solid #ddd; display: flex; align-items: center; justify-content: center; }
.l3 .combo { margin: 2px 0 0 0; }
.l3 s:first-child { width: 5px; }
.case { position: relative; }
.case.wide { width: 28px; }
.case > svg { position: absolute; left: 2px; top: -3px; }
.case.wide > svg { left: 4px; }
.case i { font: 400 12px/12px "Liberation Sans", sans-serif; color: #111; margin-top: 5px; }
.case small { font-size: 11px; }
.faint { opacity: .35; }
.help i { width: 14px; height: 14px; border-radius: 50%; background: #3f7df0; border: 1px solid #2b5cc4; color: #fff; font: 700 11px/12px "Liberation Sans", sans-serif; text-align: center; }
```
